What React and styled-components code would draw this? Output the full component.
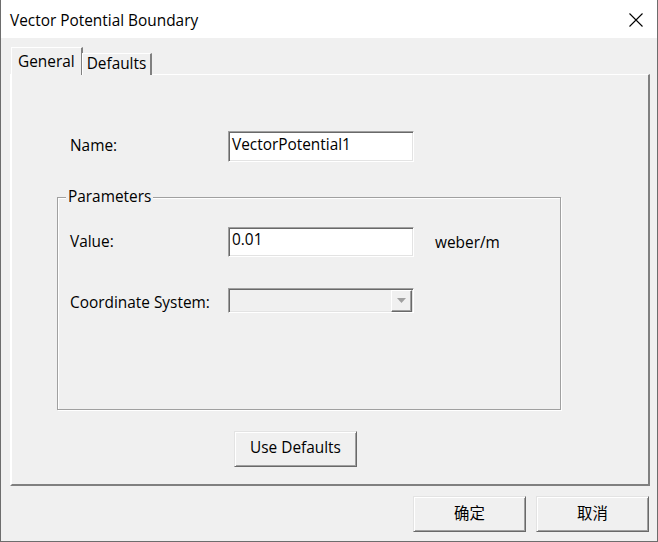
import React from "react";
import styled, { createGlobalStyle } from "styled-components";

const Global = createGlobalStyle`
  html, body { margin: 0; padding: 0; background: #f0f0f0; }
  body { font-family: "Open Sans", "Noto Sans CJK SC", sans-serif; }
  * { box-sizing: border-box; }
`;

const Window = styled.div`
  width: 658px;
  height: 542px;
  display: flex;
  flex-direction: column;
  background: #f0f0f0;
  border-left: 1px solid #6d6d6d;
  border-right: 1px solid #6d6d6d;
  border-bottom: 1px solid #6d6d6d;
  color: #000;
  font-size: 15.4px;
`;

const TitleBar = styled.div`
  height: 38px;
  flex: none;
  background: #fff;
  display: flex;
  align-items: center;
  justify-content: space-between;
  padding: 2px 14px 0 9px;
`;

const Title = styled.span`
  font-size: 15.4px;
`;

const Body = styled.div`
  flex: 1;
  display: flex;
  flex-direction: column;
  padding: 9px 7px 9px 9px;
`;

const TabRow = styled.div`
  display: flex;
  align-items: flex-end;
  height: 28px;
  margin-bottom: -1px;
  position: relative;
  z-index: 1;
  padding-left: 1px;
`;

const Tab = styled.div`
  height: ${(p) => (p.$active ? "28px" : "22px")};
  padding: ${(p) => (p.$active ? "0 6px 1px 6px" : "0 4px 2px 4px")};
  display: flex;
  align-items: center;
  background: #f0f0f0;
  border-top: 1px solid #fff;
  border-left: 1px solid #fff;
  border-right: 2px solid #808080;
  margin-left: ${(p) => (p.$active ? "0" : "-1px")};
  font-size: 15.4px;
`;

const Panel = styled.div`
  flex: 1;
  display: flex;
  flex-direction: column;
  border-top: 1px solid #fff;
  border-left: 2px solid #fff;
  border-right: 2px solid #808080;
  border-bottom: 2px solid #808080;
  padding: 56px 0 0 45px;
`;

const FormRow = styled.div`
  display: grid;
  grid-template-columns: 158px 186px auto;
  align-items: center;
  margin-left: ${(p) => p.$indent || "0px"};
  margin-top: ${(p) => p.$mt || "0px"};
`;

const Label = styled.span`
  font-size: 15.4px;
  padding: ${(p) => (p.$low ? "4px 0 0" : "0 0 2px")};
`;

const Unit = styled.span`
  font-size: 15.4px;
  margin-left: 21px;
  padding-top: 1px;
`;

const TextBox = styled.div`
  height: ${(p) => p.$h || "31px"};
  background: ${(p) => (p.$disabled ? "#f0f0f0" : "#fff")};
  border-top: 1px solid #a0a0a0;
  border-left: 1px solid #a0a0a0;
  border-right: 1px solid #fff;
  border-bottom: 1px solid #fff;
  box-shadow: inset 1px 1px 0 #696969, inset -1px -1px 0 #e3e3e3;
  display: flex;
  align-items: center;
  justify-content: space-between;
  padding: 0 2px 5px 3px;
  font-size: 15.4px;
`;

const DropButton = styled.div`
  width: 21px;
  height: 22px;
  margin: 5px -1px 0 0;
  border-top: 1px solid #fff;
  border-left: 1px solid #fff;
  border-right: 1px solid #696969;
  border-bottom: 1px solid #696969;
  box-shadow: inset -1px -1px 0 #a0a0a0;
  display: flex;
  align-items: center;
  justify-content: center;
`;

const GroupBox = styled.div`
  position: relative;
  width: 504px;
  height: 213px;
  margin-top: 35px;
  border: 1px solid #a0a0a0;
  box-shadow: 1px 1px 0 #fff, inset 1px 1px 0 #fff;
  padding-top: 29px;
`;

const Legend = styled.span`
  position: absolute;
  top: -12px;
  left: 8px;
  padding: 0 2px;
  background: #f0f0f0;
  font-size: 15.4px;
`;

const Button = styled.div`
  width: ${(p) => p.$w || "113px"};
  height: 36px;
  display: flex;
  align-items: center;
  justify-content: center;
  background: #f0f0f0;
  border-top: 1px solid #e3e3e3;
  border-left: 1px solid #e3e3e3;
  border-right: 1px solid #696969;
  border-bottom: 1px solid #696969;
  box-shadow: inset 1px 1px 0 #fff, inset -1px -1px 0 #a0a0a0;
  font-size: 15.4px;
  padding-bottom: 3px;
`;

const CenterRow = styled.div`
  margin: 21px 0 0 177px;
`;

const Footer = styled.div`
  display: flex;
  justify-content: flex-end;
  gap: 10px;
  margin-top: 10px;
  padding-right: 1px;
`;

const CloseIcon = () => (
  <svg width="14" height="14" viewBox="0 0 14 14">
    <path d="M0.5 0.5 L13.5 13.5 M13.5 0.5 L0.5 13.5" stroke="#000" strokeWidth="1.1" fill="none" />
  </svg>
);

const Arrow = () => (
  <svg width="9" height="5" viewBox="0 0 9 5">
    <path d="M0 0 H9 L4.5 5 Z" fill="#a0a0a0" />
  </svg>
);

export default function App() {
  return (
    <>
      <Global />
      <Window>
        <TitleBar>
          <Title>Vector Potential Boundary</Title>
          <CloseIcon />
        </TitleBar>
        <Body>
          <TabRow>
            <Tab $active>General</Tab>
            <Tab>Defaults</Tab>
          </TabRow>
          <Panel>
            <FormRow $indent="13px">
              <Label>Name:</Label>
              <TextBox>VectorPotential1</TextBox>
            </FormRow>
            <GroupBox>
              <Legend>Parameters</Legend>
              <FormRow $indent="12px">
                <Label>Value:</Label>
                <TextBox $h="30px">0.01</TextBox>
                <Unit>weber/m</Unit>
              </FormRow>
              <FormRow $indent="12px" $mt="31px">
                <Label $low>Coordinate System:</Label>
                <TextBox $h="25px" $disabled>
                  <span />
                  <DropButton>
                    <Arrow />
                  </DropButton>
                </TextBox>
              </FormRow>
            </GroupBox>
            <CenterRow>
              <Button $w="123px">Use Defaults</Button>
            </CenterRow>
          </Panel>
          <Footer>
            <Button>确定</Button>
            <Button>取消</Button>
          </Footer>
        </Body>
      </Window>
    </>
  );
}
